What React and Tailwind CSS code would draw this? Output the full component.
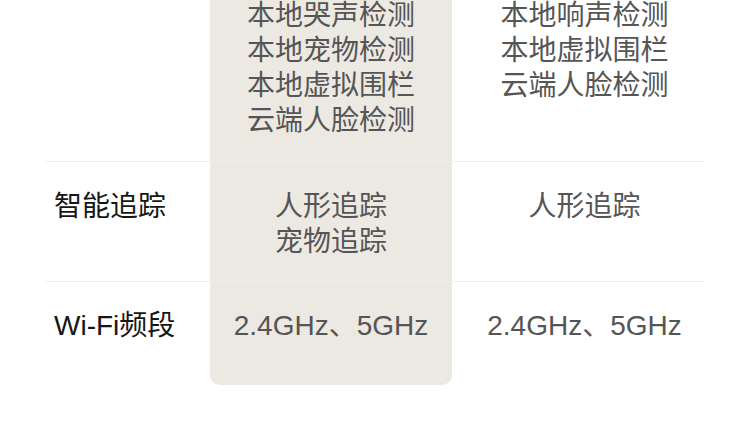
import React from "react";

const font = { fontFamily: '"Liberation Sans", "Noto Sans CJK SC", sans-serif' };

export default function App() {
  return (
    <div className="w-[750px] h-[425px] overflow-hidden bg-white" style={font}>
      <div className="ml-[45px] w-[659px] text-[28px] leading-[35px] mt-[-2px]">
        <div className="grid grid-cols-[165px_242px_252px] border-b border-[#efefef]">
          <div></div>
          <div className="bg-[#ece8e2] text-center text-[#555555] pb-[23px]">
            <div>本地哭声检测</div>
            <div>本地宠物检测</div>
            <div>本地虚拟围栏</div>
            <div>云端人脸检测</div>
          </div>
          <div className="pl-[13px] text-center text-[#555555]">
            <div>本地响声检测</div>
            <div>本地虚拟围栏</div>
            <div>云端人脸检测</div>
          </div>
        </div>
        <div className="grid grid-cols-[165px_242px_252px] border-b border-[#efefef]">
          <div className="pl-[9px] pt-[27px] text-[#161616]">智能追踪</div>
          <div className="bg-[#ece8e2] text-center text-[#555555] pt-[27px] pb-[22px]">
            <div>人形追踪</div>
            <div>宠物追踪</div>
          </div>
          <div className="pl-[13px] pt-[27px] text-center text-[#555555]">人形追踪</div>
        </div>
        <div className="grid grid-cols-[165px_242px_252px]">
          <div className="pl-[9px] pt-[26px] text-[#161616]">Wi-Fi频段</div>
          <div className="bg-[#ece8e2] text-center text-[#555555] pt-[26px] pb-[42px] rounded-b-[10px]">
            2.4GHz、5GHz
          </div>
          <div className="pl-[13px] pt-[26px] text-center text-[#555555]">2.4GHz、5GHz</div>
        </div>
      </div>
    </div>
  );
}
